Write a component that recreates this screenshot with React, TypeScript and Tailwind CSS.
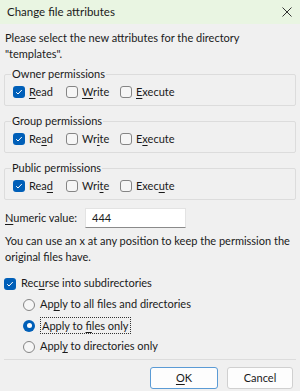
import React from 'react';

const font = { fontFamily: 'Lato, "Noto Sans", sans-serif' };

function Check({ checked }: { checked?: boolean }) {
  return checked ? (
    <span className="flex h-[12px] w-[12px] shrink-0 items-center justify-center rounded-[3px] bg-[#005fb8]">
      <svg width="8" height="8" viewBox="0 0 8 8" fill="none">
        <path d="M1.2 4.2 L3 6 L6.8 2" stroke="#ffffff" strokeWidth="1" />
      </svg>
    </span>
  ) : (
    <span className="h-[12px] w-[12px] shrink-0 rounded-[3px] border border-[#858585] bg-[#f6f6f6]" />
  );
}

function Radio({ checked }: { checked?: boolean }) {
  return checked ? (
    <span className="flex h-[12px] w-[12px] shrink-0 items-center justify-center rounded-full bg-[#005fb8]">
      <span className="h-[5px] w-[5px] rounded-full bg-white" />
    </span>
  ) : (
    <span className="h-[12px] w-[12px] shrink-0 rounded-full border border-[#858585] bg-[#f6f6f6]" />
  );
}

// label with one underlined access key
function Key({ text, at }: { text: string; at: number }) {
  if (at < 0) return <>{text}</>;
  return (
    <>
      {text.slice(0, at)}
      <span className="underline underline-offset-2">{text[at]}</span>
      {text.slice(at + 1)}
    </>
  );
}

function PermGroup({ title, keys }: { title: string; keys: [number, number, number] }) {
  const items = ['Read', 'Write', 'Execute'];
  return (
    <fieldset className="mx-[4px] block h-[39px] rounded-[2px] border border-[#dcdcdc] px-[8px] py-0">
      <legend className="-ml-[2px] px-[1px] leading-[14px]">{title}</legend>
      <div className="mt-[1px] flex h-[20px] items-center">
        {items.map((name, i) => (
          <label
            key={name}
            className={`flex items-center gap-[4px] whitespace-nowrap ${i === 0 ? 'w-[53px]' : i === 1 ? 'w-[54px]' : ''}`}
          >
            <Check checked={i === 0} />
            <span>
              <Key text={name} at={keys[i]} />
            </span>
          </label>
        ))}
      </div>
    </fieldset>
  );
}

export default function App() {
  return (
    <div className="h-[391px] w-[300px] overflow-hidden bg-[#f0f0f0] text-[11px] text-[#1a1a1a]" style={font}>
      {/* title bar */}
      <div className="flex h-[24px] items-center justify-between bg-[#e9f5e2] pl-[7px] pr-[8px]">
        <span className="text-[11.5px]">Change file attributes</span>
        <svg width="10" height="10" viewBox="0 0 10 10">
          <path d="M0.5 0.5 L9.5 9.5 M9.5 0.5 L0.5 9.5" stroke="#333" strokeWidth="1" />
        </svg>
      </div>

      <p className="mt-[6px] whitespace-nowrap px-[5px] leading-[16px]">
        Please select the new attributes for the directory
        <br />
        "templates".
      </p>

      <div className="mt-[5px] flex flex-col gap-[8px]">
        <PermGroup title="Owner permissions" keys={[0, 0, 0]} />
        <PermGroup title="Group permissions" keys={[2, 2, 1]} />
        <PermGroup title="Public permissions" keys={[3, 3, 4]} />
      </div>

      <div className="mt-[8px] flex items-center px-[5px]">
        <span className="w-[80px] whitespace-nowrap">
          <Key text="Numeric value:" at={0} />
        </span>
        <div className="flex h-[20px] w-[101px] items-center border border-[#e3e3e3] border-b-[#8a8a8a] bg-white px-[6px]">
          444
        </div>
      </div>

      <p className="mt-[5px] whitespace-nowrap px-[5px] leading-[16px]">
        You can use an x at any position to keep the permission the
        <br />
        original files have.
      </p>

      <div className="mt-[8px] flex flex-col px-[4px]">
        <label className="flex h-[21px] items-center gap-[5px] whitespace-nowrap">
          <Check checked />
          <span>
            <Key text="Recurse into subdirectories" at={3} />
          </span>
        </label>
        <div className="flex flex-col pl-[19px]">
          <label className="flex h-[21px] items-center gap-[5px] whitespace-nowrap">
            <Radio />
            <span>
              <Key text="Apply to all files and directories" at={2} />
            </span>
          </label>
          <label className="flex h-[21px] items-center gap-[5px] whitespace-nowrap">
            <Radio checked />
            <span className="border border-dotted border-[#333] px-[1px] leading-[15px]">
              <Key text="Apply to files only" at={9} />
            </span>
          </label>
          <label className="flex h-[21px] items-center gap-[5px] whitespace-nowrap">
            <Radio />
            <span>
              <Key text="Apply to directories only" at={4} />
            </span>
          </label>
        </div>
      </div>

      <div className="mx-[4px] mt-[2px] border-t border-[#dcdcdc]" />

      <div className="mt-[7px] flex justify-end gap-[9px] pr-[7px]">
        <button className="h-[22px] w-[68px] rounded-[3px] border border-[#5b9bd5] bg-[#fdfdfd]">
          <Key text="OK" at={0} />
        </button>
        <button className="h-[22px] w-[66px] rounded-[3px] border border-[#d0d0d0] bg-[#fdfdfd]">Cancel</button>
      </div>
    </div>
  );
}
